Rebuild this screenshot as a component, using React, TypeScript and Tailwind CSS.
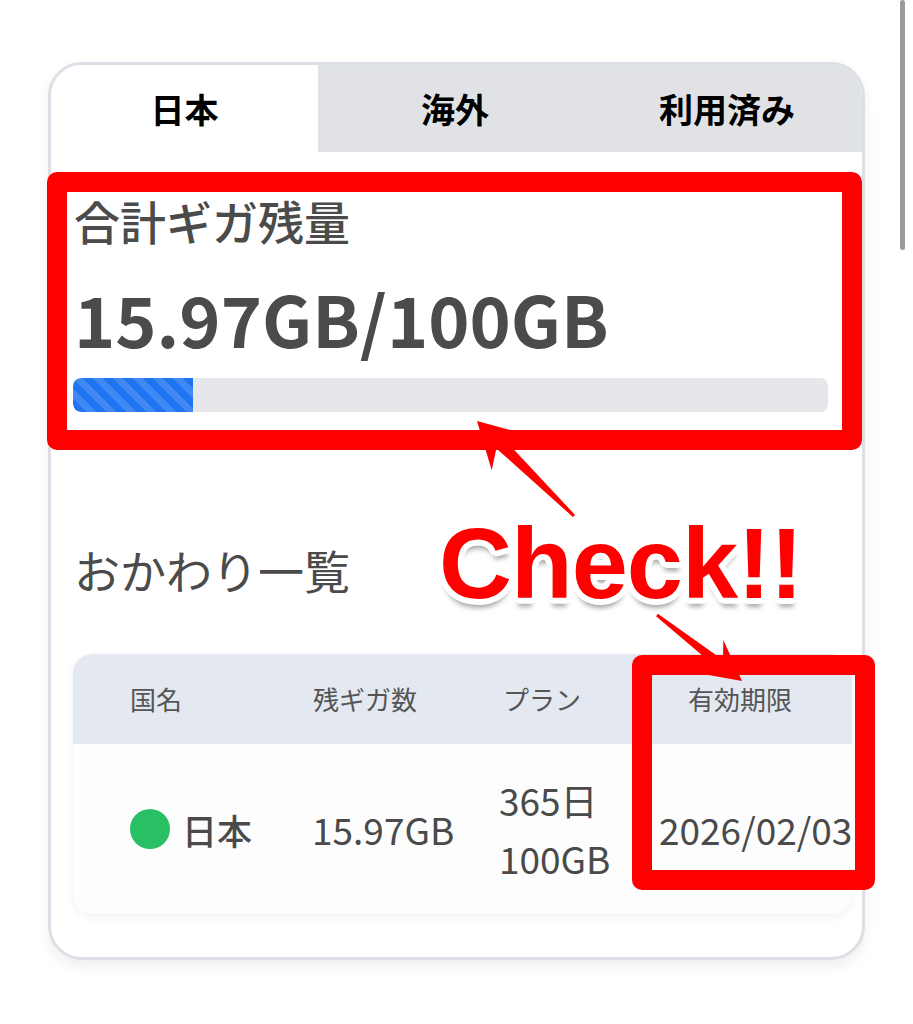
import React from "react";

type P = [number, number];

function arrowPoints(tail: P, tip: P, L: number, W: number, n: number): string {
  const dx = tip[0] - tail[0];
  const dy = tip[1] - tail[1];
  const len = Math.hypot(dx, dy);
  const ux = dx / len;
  const uy = dy / len;
  const px = -uy;
  const py = ux;
  const bx = tip[0] - ux * L;
  const by = tip[1] - uy * L;
  const nx = tip[0] - ux * (L - 12);
  const ny = tip[1] - uy * (L - 12);
  const pts: P[] = [
    tip,
    [bx + px * W, by + py * W],
    [nx + px * n, ny + py * n],
    [tail[0] + px * 1.5, tail[1] + py * 1.5],
    [tail[0] - px * 1.5, tail[1] - py * 1.5],
    [nx - px * n, ny - py * n],
    [bx - px * W, by - py * W],
  ];
  return pts.map((p) => `${p[0].toFixed(1)},${p[1].toFixed(1)}`).join(" ");
}

export default function App() {
  return (
    <div className="relative w-[913px] h-[1024px] bg-white overflow-hidden font-['Noto_Sans_CJK_JP',sans-serif]">
      <div className="pt-[62px] pl-[48px]">
        <div className="w-[817px] rounded-[34px] border-[3px] border-[#dcdfe5] bg-white overflow-hidden shadow-[0_6px_14px_rgba(0,0,0,0.07)] pb-[43px]">
          {/* Tabs */}
          <div className="grid grid-cols-[267px_274px_270px] h-[87px]">
            <div className="flex items-center justify-center bg-white text-[34px] font-bold text-black leading-none">
              日本
            </div>
            <div className="flex items-center justify-center bg-[#e0e2e5] text-[34px] font-bold text-black leading-none">
              海外
            </div>
            <div className="flex items-center justify-center bg-[#e0e2e5] text-[34px] font-bold text-black leading-none">
              利用済み
            </div>
          </div>

          {/* Total */}
          <div className="pl-[23px] pr-[34px]">
            <div className="mt-[45px] text-[46px] leading-none font-medium text-[#4b4b4b]">
              合計ギガ残量
            </div>
            <div className="mt-[40px] text-[70px] leading-none font-bold text-[#4b4b4b]">
              15.97GB/100GB
            </div>
            <div className="mt-[25px] ml-[-1px] h-[34px] rounded-[8px] bg-[#e5e7eb] overflow-hidden">
              <div className="h-full w-[120px] rounded-l-[8px] bg-[#1f74f2] bg-[linear-gradient(45deg,rgba(255,255,255,0.15)_25%,transparent_25%,transparent_50%,rgba(255,255,255,0.15)_50%,rgba(255,255,255,0.15)_75%,transparent_75%,transparent)] bg-[length:20px_20px]" />
            </div>

            <div className="mt-[134px] text-[46px] leading-none font-normal text-[#4b4b4b]">
              おかわり一覧
            </div>
          </div>

          {/* Table */}
          <div className="mt-[62px] ml-[22px] w-[779px] rounded-[20px] overflow-hidden shadow-[0_3px_10px_rgba(0,0,0,0.06)] bg-[#fdfdfd]">
            <div className="grid grid-cols-[227px_190px_155px_207px] h-[90px] items-center bg-[#e3e8f1] text-[26px] leading-none text-[#555555]">
              <div className="pl-[57px]">国名</div>
              <div className="pl-[13px]">残ギガ数</div>
              <div className="pl-[13px]">プラン</div>
              <div className="pl-[43px]">有効期限</div>
            </div>
            <div className="grid grid-cols-[227px_190px_155px_207px] h-[170px] items-center text-[37px] text-[#4a4a4a]">
              <div className="pl-[57px] flex items-center gap-[12px]">
                <span className="w-[40px] h-[40px] rounded-full bg-[#28bf65] shrink-0" />
                <span className="leading-none font-medium text-[35px]">日本</span>
              </div>
              <div className="pl-[12px] leading-none">15.97GB</div>
              <div className="pl-[9px] leading-[58px]">
                <div>365日</div>
                <div>100GB</div>
              </div>
              <div className="pl-[14px] leading-none">2026/02/03</div>
            </div>
          </div>
        </div>
      </div>

      {/* scrollbar */}
      <div className="absolute left-[900px] top-0 w-[5px] h-[250px] rounded-full bg-[#9a9a9a]" />

      {/* annotations */}
      <div className="absolute left-[47px] top-[172px] w-[815px] h-[278px] border-[20px] border-[#ff0000] rounded-[10px]" />
      <div className="absolute left-[632px] top-[655px] w-[243px] h-[235px] border-[20px] border-[#ff0000] rounded-[10px]" />

      <svg className="absolute left-0 top-0 pointer-events-none" width="913" height="1024" viewBox="0 0 913 1024">
        <polygon points={arrowPoints([574, 516], [477, 421], 45, 25, 6)} fill="#ff0000" />
        <polygon points={arrowPoints([657, 615], [742, 681], 40, 21, 5)} fill="#ff0000" />
      </svg>

      <div className="absolute left-[439px] top-[513px] text-[101px] leading-none font-bold tracking-[-1px] text-[#ff0000] font-['Liberation_Sans',Arial,sans-serif] [text-shadow:6px_0_0_#fff,-6px_0_0_#fff,0_6px_0_#fff,0_-6px_0_#fff,4px_4px_0_#fff,-4px_4px_0_#fff,4px_-4px_0_#fff,-4px_-4px_0_#fff,3px_5px_0_#fff,-3px_5px_0_#fff,5px_3px_0_#fff,-5px_3px_0_#fff,3px_-5px_0_#fff,-3px_-5px_0_#fff,5px_-3px_0_#fff,-5px_-3px_0_#fff,0_9px_5px_rgba(0,0,0,0.35)]">
        Check!!
      </div>
    </div>
  );
}
